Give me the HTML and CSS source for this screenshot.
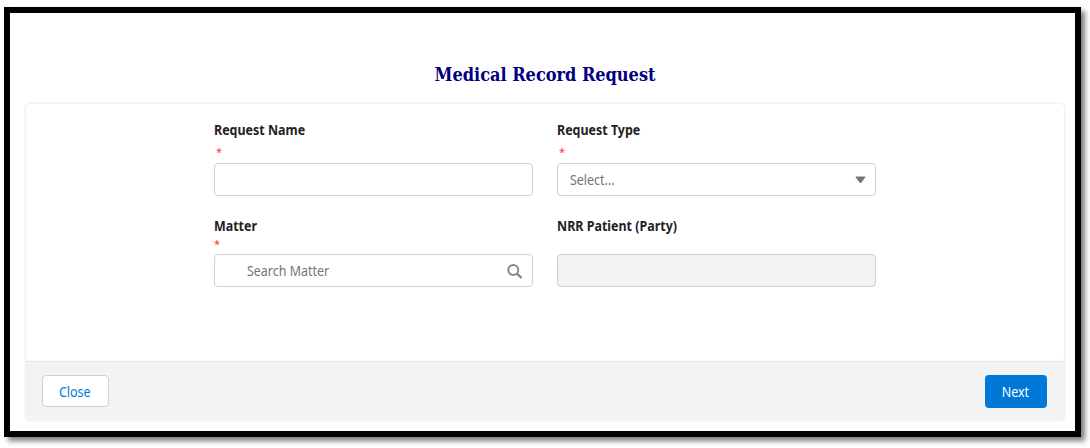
FILE: index.html
```html
<!DOCTYPE html>
<html lang="en">
<head>
<meta charset="utf-8">
<title>Medical Record Request</title>
<link rel="stylesheet" href="styles.css">
</head>
<body>
<main class="frame">
  <h1 class="title">Medical Record Request</h1>
  <form class="card">
    <div class="fields">
      <div class="field">
        <label class="label">Request Name</label>
        <span class="required inset">*</span>
        <div class="control"></div>
      </div>
      <div class="field">
        <label class="label">Request Type</label>
        <span class="required inset">*</span>
        <div class="control select"><span class="value">Select...</span>
          <svg class="arrow" width="11" height="8" viewBox="0 0 12 8" preserveAspectRatio="none"><path d="M1.2.6h9.6q.8.1.3.8L6.8 6.7q-.8.8-1.6 0L.9 1.4Q.4.7 1.2.6z" fill="#747474"/></svg>
        </div>
      </div>
      <div class="field">
        <label class="label">Matter</label>
        <span class="required">*</span>
        <div class="control search"><span class="value">Search Matter</span>
          <svg class="lens" width="16" height="16" viewBox="0 0 16 16" fill="none" stroke="#858585"><circle cx="6.3" cy="6.9" r="5" stroke-width="2"/><path d="M10.2 10.9l3.7 3.5" stroke-width="2.2" stroke-linecap="round"/></svg>
        </div>
      </div>
      <div class="field">
        <label class="label">NRR Patient (Party)</label>
        <span class="required"></span>
        <div class="control disabled"></div>
      </div>
    </div>
    <footer class="footer">
      <button type="button" class="button close"><span class="caption">Close</span></button>
      <button type="button" class="button next"><span class="caption">Next</span></button>
    </footer>
  </form>
</main>
</body>
</html>
```
FILE: styles.css
```css
* { box-sizing: border-box; }
body {
  margin: 0;
  padding: 7px 9px 0 4px;
  height: 448px;
  overflow: hidden;
  background: #fff;
  font-family: "Noto Sans", sans-serif;
  font-size: 14px;
}
.frame {
  height: 430px;
  border: 6px solid #000;
  padding: 0 11px 0 16px;
  background: #fff;
  box-shadow: 4px 4px 5px rgba(0, 0, 0, .5);
}
.title {
  margin: 0;
  height: 91px;
  padding: 50px 0 0;
  text-align: center;
  font: bold 18px/24px "DejaVu Serif Condensed", "DejaVu Serif", serif;
  font-stretch: condensed;
  letter-spacing: -.03px;
  color: #000080;
}
.card {
  height: 316px;
  display: flex;
  flex-direction: column;
  border-radius: 4px;
  background: #f3f3f3;
  box-shadow: 0 0 3px rgba(0, 0, 0, .16);
}
.fields {
  height: 258px;
  display: grid;
  grid-template-columns: 319px 319px;
  grid-template-rows: 96px 91px;
  column-gap: 24px;
  padding: 17px 0 0 188px;
  border-bottom: 1px solid #e4e4e4;
  border-radius: 4px;
  background: #fff;
}
.field { display: flex; flex-direction: column; }
.label {
  height: 18px;
  line-height: 18px;
  font-weight: 700;
  color: #222;
  white-space: nowrap;
  transform: scaleX(.89);
  transform-origin: left;
}
.value { transform: scaleX(.89); transform-origin: left; }
.caption { display: inline-block; transform: scaleX(.89); }
.required {
  height: 19px;
  padding-top: 0;
  font-size: 11px;
  line-height: 17px;
  color: #f33;
}
.required.inset { height: 24px; padding: 4px 0 0 2px; }
.control {
  height: 33px;
  flex: none;
  display: flex;
  align-items: center;
  justify-content: space-between;
  border: 1px solid #d0d0d0;
  border-radius: 4px;
  color: #747474;
}
.select { padding: 0 9px 0 12px; }
.search { padding: 0 9px 0 32px; }
.disabled { background: #f2f2f2; }
.footer {
  flex: 1;
  display: flex;
  align-items: center;
  justify-content: space-between;
  padding: 0 17px 0 16px;
}
.button {
  height: 32px;
  border-radius: 4px;
  font: 14px "Noto Sans", sans-serif;
  padding: 0 1px 0 0;
}
.close { width: 67px; border: 1px solid #d0d0d0; background: #fff; color: #0078d4; }
.next { width: 62px; height: 33px; border: 0; background: #0078d7; color: #fff; }
```
